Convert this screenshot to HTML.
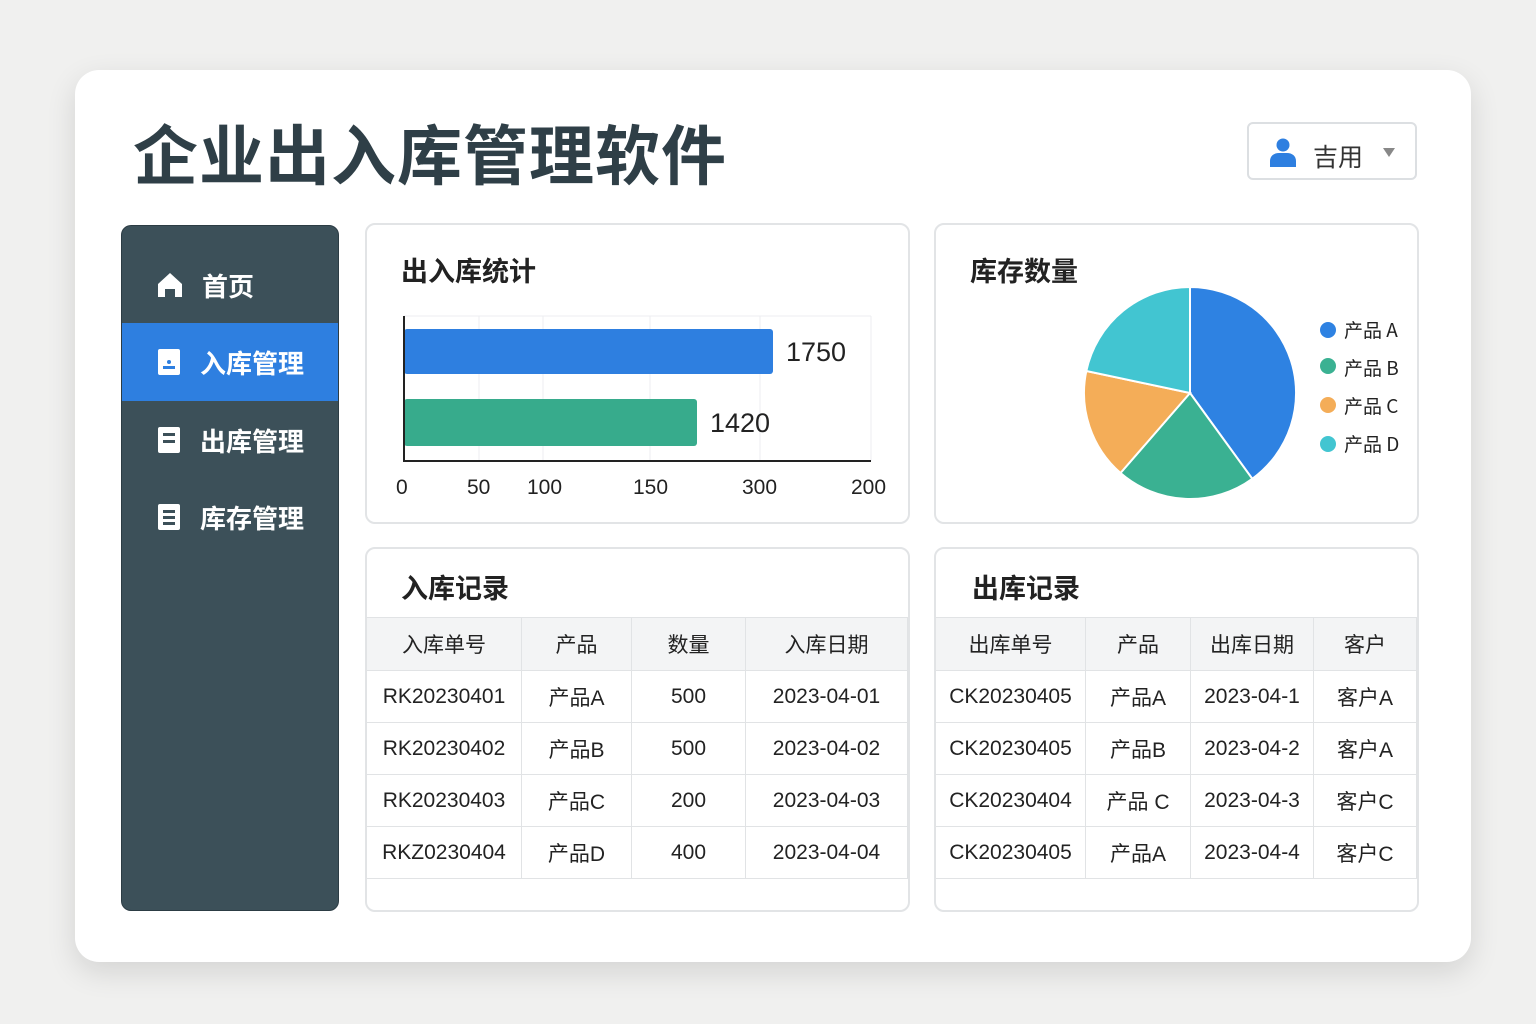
<!DOCTYPE html>
<html><head><meta charset="utf-8"><style>
*{margin:0;padding:0;box-sizing:border-box}
body{width:1536px;height:1024px;background:#f0f0ef;font-family:"Liberation Sans","Noto Sans CJK SC",sans-serif;position:relative;overflow:hidden;color:#222}
.abs{position:absolute}
.main{left:75px;top:70px;width:1396px;height:892px;background:#fff;border-radius:24px;box-shadow:0 10px 30px rgba(0,0,0,.12)}
.title{left:133px;top:104px;font-size:65px;font-weight:bold;color:#2f3f47;letter-spacing:1px;font-family:"Noto Sans CJK SC",sans-serif}
.user{left:1247px;top:122px;width:170px;height:58px;border:2px solid #dcdfe2;border-radius:6px}
.side{left:121px;top:225px;width:218px;height:686px;background:#3c5059;border-radius:10px;overflow:hidden;border:1px solid #2c3c44}
.item{position:absolute;left:0;width:218px;height:78px;color:#fff;font-size:26px;font-weight:bold;font-family:"Noto Sans CJK SC",sans-serif;display:flex;align-items:center;padding-left:34px}
.item svg{margin-right:18px}
.card{background:#fff;border:2px solid #e2e4e6;border-radius:10px}
.ct{font-size:27px;font-weight:bold;font-family:"Noto Sans CJK SC",sans-serif;color:#222}
table{border-collapse:collapse;position:absolute;font-size:21px;color:#222}
td,th{border:1px solid #e1e3e5;text-align:center;font-weight:normal;padding:0}
th{background:#f3f4f5;height:53px;font-family:"Noto Sans CJK SC",sans-serif}
td{height:52px}
.ax{font-size:21px;color:#222}
</style></head><body>
<div class="abs main"></div>
<div class="abs title">企业出入库管理软件</div>
<div class="abs user">
<svg class="abs" style="left:18px;top:12px" width="32" height="32" viewBox="0 0 32 32"><circle cx="16" cy="9" r="6.5" fill="#2e7fe0"/><path d="M3 31v-6c0-5 4-8 9-8h8c5 0 9 3 9 8v6z" fill="#2e7fe0"/></svg>
<div class="abs" style="left:64px;top:14px;font-size:25px;color:#333;font-family:'Noto Sans CJK SC',sans-serif">吉用</div>
<div class="abs" style="left:134px;top:24px;width:0;height:0;border-left:6px solid transparent;border-right:6px solid transparent;border-top:9px solid #888"></div>
</div>
<div class="abs side">
<div class="item" style="top:20px"><svg width="28" height="28" viewBox="0 0 28 28"><path d="M2 13L14 2l12 11v13h-7v-8h-10v8H2z" fill="#fff"/></svg>首页</div>
<div class="item" style="top:97px;background:#2e7fe0"><svg width="26" height="28" viewBox="0 0 26 28"><rect x="2" y="1" width="22" height="26" rx="2" fill="#fff"/><rect x="7" y="18" width="12" height="3" fill="#2e7fe0"/><circle cx="13" cy="14" r="2" fill="#2e7fe0"/></svg>入库管理</div>
<div class="item" style="top:175px"><svg width="26" height="28" viewBox="0 0 26 28"><rect x="2" y="1" width="22" height="26" rx="2" fill="#fff"/><rect x="7" y="7" width="12" height="3" fill="#3c5059"/><rect x="7" y="14" width="12" height="3" fill="#3c5059"/></svg>出库管理</div>
<div class="item" style="top:252px"><svg width="26" height="28" viewBox="0 0 26 28"><rect x="2" y="1" width="22" height="26" rx="2" fill="#fff"/><rect x="7" y="7" width="12" height="3" fill="#3c5059"/><rect x="7" y="13" width="12" height="3" fill="#3c5059"/><rect x="7" y="19" width="12" height="3" fill="#3c5059"/></svg>库存管理</div>
</div>

<div class="abs card" style="left:365px;top:223px;width:545px;height:301px"></div>
<div class="abs ct" style="left:401px;top:250px">出入库统计</div>
<div class="abs card" style="left:934px;top:223px;width:485px;height:301px"></div>
<div class="abs ct" style="left:970px;top:250px">库存数量</div>
<div class="abs" style="left:1344px;top:311px;font-size:19px;line-height:38px;font-family:'Noto Sans CJK SC',sans-serif">产品 A<br>产品 B<br>产品 C<br>产品 D</div>

<svg class="abs" style="left:0;top:0" width="1536" height="1024">
<g stroke="#eceef0" stroke-width="1"><line x1="479" y1="316" x2="479" y2="461"/><line x1="543" y1="316" x2="543" y2="461"/><line x1="650" y1="316" x2="650" y2="461"/><line x1="760" y1="316" x2="760" y2="461"/><line x1="871" y1="316" x2="871" y2="461"/><line x1="404" y1="316" x2="871" y2="316"/></g>
<rect x="404" y="329" width="369" height="45" rx="3" fill="#2e7fe0"/>
<rect x="404" y="399" width="293" height="47" rx="3" fill="#37ab8c"/>
<path d="M404 316V461H871" fill="none" stroke="#222" stroke-width="2"/>
<path d="M1190 393L1190 287A106 106 0 0 1 1252.3 478.8Z" fill="#2e82e2" stroke="#fff" stroke-width="2"/>
<path d="M1190 393L1252.3 478.8A106 106 0 0 1 1120.5 473Z" fill="#3ab192" stroke="#fff" stroke-width="2"/>
<path d="M1190 393L1120.5 473A106 106 0 0 1 1086.3 371Z" fill="#f4ad58" stroke="#fff" stroke-width="2"/>
<path d="M1190 393L1086.3 371A106 106 0 0 1 1190 287Z" fill="#42c5d1" stroke="#fff" stroke-width="2"/>
<circle cx="1328" cy="330" r="8" fill="#2e82e2"/><circle cx="1328" cy="366" r="8" fill="#3ab192"/><circle cx="1328" cy="405" r="8" fill="#f4ad58"/><circle cx="1328" cy="444" r="8" fill="#42c5d1"/>
</svg>
<div class="abs" style="left:786px;top:337px;font-size:27px">1750</div>
<div class="abs" style="left:710px;top:408px;font-size:27px">1420</div>
<div class="abs ax" style="left:396px;top:476px">0</div>
<div class="abs ax" style="left:467px;top:476px">50</div>
<div class="abs ax" style="left:527px;top:476px">100</div>
<div class="abs ax" style="left:633px;top:476px">150</div>
<div class="abs ax" style="left:742px;top:476px">300</div>
<div class="abs ax" style="left:851px;top:476px">200</div>

<div class="abs card" style="left:365px;top:547px;width:545px;height:365px"></div>
<div class="abs ct" style="left:401px;top:567px">入库记录</div>
<table style="left:366px;top:617px;width:542px">
<tr><th style="width:155px">入库单号</th><th style="width:110px">产品</th><th style="width:114px">数量</th><th>入库日期</th></tr>
<tr><td>RK20230401</td><td>产品A</td><td>500</td><td>2023-04-01</td></tr>
<tr><td>RK20230402</td><td>产品B</td><td>500</td><td>2023-04-02</td></tr>
<tr><td>RK20230403</td><td>产品C</td><td>200</td><td>2023-04-03</td></tr>
<tr><td>RKZ0230404</td><td>产品D</td><td>400</td><td>2023-04-04</td></tr>
</table>

<div class="abs card" style="left:934px;top:547px;width:485px;height:365px"></div>
<div class="abs ct" style="left:972px;top:567px">出库记录</div>
<table style="left:935px;top:617px;width:482px">
<tr><th style="width:150px">出库单号</th><th style="width:105px">产品</th><th style="width:123px">出库日期</th><th>客户</th></tr>
<tr><td>CK20230405</td><td>产品A</td><td>2023-04-1</td><td>客户A</td></tr>
<tr><td>CK20230405</td><td>产品B</td><td>2023-04-2</td><td>客户A</td></tr>
<tr><td>CK20230404</td><td>产品 C</td><td>2023-04-3</td><td>客户C</td></tr>
<tr><td>CK20230405</td><td>产品A</td><td>2023-04-4</td><td>客户C</td></tr>
</table>
</body></html>
